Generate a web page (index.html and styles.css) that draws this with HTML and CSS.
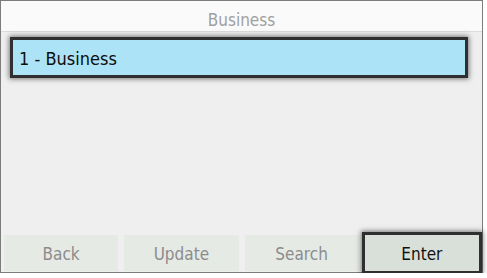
FILE: index.html
```html
<!DOCTYPE html>
<html lang="en">
<head>
    <meta charset="UTF-8">
    <title>Business</title>
    <link rel="stylesheet" href="styles.css">
</head>
<body>
    <div class="screen">
        <header class="title-bar">Business</header>

        <main class="list">
            <div class="list-item selected">1 - Business</div>
        </main>

        <footer class="softkeys">
            <button class="softkey">Back</button>
            <button class="softkey">Update</button>
            <button class="softkey">Search</button>
            <button class="softkey active">Enter</button>
        </footer>
    </div>
</body>
</html>
```

FILE: styles.css
```css
:root {
    --frame-color: #7c7c7c;
    --screen-bg: #efefef;
    --title-bg: #fafafa;
    --select-bg: #ade3f6;
    --key-bg: #e5eae5;
    --key-active-bg: #d9e0d9;
    --ring-color: #2f2f2f;
    --muted-text: #8c8c8c;
}

* {
    box-sizing: border-box;
    margin: 0;
    padding: 0;
}

body {
    font-family: 'DejaVu Sans Condensed', 'DejaVu Sans', sans-serif;
    font-stretch: condensed;
    background: #fff;
}

.screen {
    width: 483px;
    height: 273px;
    border: 1px solid var(--frame-color);
    background: var(--screen-bg);
    display: flex;
    flex-direction: column;
}

.title-bar {
    height: 31px;
    padding-top: 9px;
    background: var(--title-bg);
    border-bottom: 1px solid #dcdcdc;
    color: #a0a0a0;
    font-size: 17px;
    line-height: 20px;
    text-align: center;
}

.list {
    flex: 1;
    padding: 8px 17px 0 12px;
}

.list-item {
    height: 35px;
    padding: 0 6px;
    font-size: 18px;
    line-height: 37px;
    color: #0d0d0d;
}

.list-item.selected {
    background: var(--select-bg);
    box-shadow: 0 0 0 3px var(--ring-color), 0 0 5px 4px rgba(0, 0, 0, 0.5);
}

.softkeys {
    display: grid;
    grid-template-columns: repeat(4, 1fr);
    gap: 6px;
    padding: 0 3px 1px 3px;
}

.softkey {
    height: 36px;
    border: none;
    background: var(--key-bg);
    color: var(--muted-text);
    font-family: inherit;
    font-stretch: condensed;
    font-size: 17px;
    padding-top: 2px;
}

.softkey.active {
    background: var(--key-active-bg);
    color: #111;
    box-shadow: 0 0 0 3px var(--ring-color), 0 0 5px 4px rgba(0, 0, 0, 0.5);
}
```
